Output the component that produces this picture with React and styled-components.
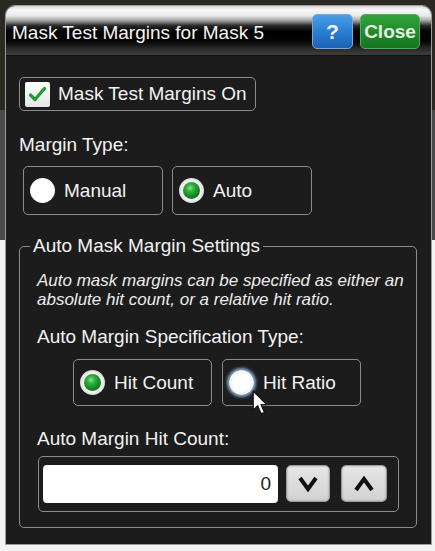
import React from "react";
import styled, { createGlobalStyle, css } from "styled-components";

const GlobalStyle = createGlobalStyle`
  html, body {
    margin: 0;
    padding: 0;
  }
  body {
    width: 435px;
    height: 551px;
    overflow: hidden;
    font-family: "Liberation Sans", Arial, sans-serif;
    background: linear-gradient(
      to bottom,
      #2b2a22 0,
      #2b2a22 110px,
      #4a4a4a 110px,
      #4a4a4a 240px,
      #f3f3f3 240px
    );
  }
`;

const Dialog = styled.div`
  position: relative;
  margin: 5px 0 0 5px;
  width: 425px;
  background: #1d1c1d;
  border: 1px solid #9a9a9a;
  border-radius: 10px 10px 0 0;
  overflow: hidden;
  color: #f2f2f2;
`;

const TitleBar = styled.div`
  height: 50px;
  box-sizing: border-box;
  display: flex;
  align-items: flex-start;
  padding: 8px 11px 0 6px;
  border-bottom: 1px solid #111;
  background: linear-gradient(
    to bottom,
    #d8d8d8 0%,
    #f8f8f8 8%,
    #e8e8e8 20%,
    #a0a0a0 30%,
    #2a2a2a 40%,
    #000 52%,
    #050505 72%,
    #2c2c2c 88%,
    #3c3c3c 100%
  );
`;

const Title = styled.div`
  flex: 1;
  margin-top: 8px;
  font-size: 19px;
  line-height: 22px;
  color: #f4f4f4;
  white-space: nowrap;
`;

const TitleButton = styled.button`
  height: 35px;
  margin-left: 7px;
  padding: 0;
  border-radius: 5px;
  font-family: "Liberation Sans", Arial, sans-serif;
  font-weight: bold;
  color: #f4f4f4;
  ${(p) =>
    p.$kind === "help"
      ? css`
          width: 41px;
          font-size: 21px;
          border: 1px solid #7aa8d8;
          background: linear-gradient(to bottom, #4c9ee6 0%, #2a7ed4 50%, #1c62b4 100%);
        `
      : css`
          width: 60px;
          font-size: 19px;
          border: 1px solid #5aa85e;
          background: linear-gradient(to bottom, #33a23e 0%, #1f8c2a 50%, #177420 100%);
          color: #e4efe4;
        `}
`;

const Body = styled.div`
  padding: 21px 14px 16px 13px;
  display: flex;
  flex-direction: column;
  align-items: flex-start;
`;

const Frame = styled.div`
  box-sizing: border-box;
  border: 1px solid #8c8c8c;
  border-radius: 5px;
`;

const CheckFrame = styled(Frame)`
  width: 237px;
  height: 34px;
  display: flex;
  align-items: center;
  padding-left: 5px;
  font-size: 19px;
`;

const CheckBox = styled.span`
  width: 25px;
  height: 25px;
  margin-right: 8px;
  border-radius: 2px;
  background: linear-gradient(to bottom, #fff, #e6e6e6);
  display: flex;
  align-items: center;
  justify-content: center;
`;

const Label = styled.div`
  font-size: 19px;
  line-height: 22px;
  margin-top: ${(p) => p.$top || 0}px;
  white-space: nowrap;
`;

const RadioRow = styled.div`
  display: flex;
  gap: ${(p) => p.$gap}px;
  margin-top: ${(p) => p.$top}px;
  margin-left: ${(p) => p.$left}px;
`;

const RadioBox = styled(Frame)`
  position: relative;
  width: ${(p) => p.$w}px;
  height: ${(p) => p.$h}px;
  display: flex;
  align-items: center;
  padding-left: 6px;
  font-size: 19px;
`;

const RadioDot = styled.span`
  width: 25px;
  height: 25px;
  border-radius: 50%;
  margin-right: 9px;
  flex: none;
  display: flex;
  align-items: center;
  justify-content: center;
  ${(p) =>
    p.$on
      ? css`
          background: radial-gradient(circle, #f4f4f4 55%, #bcbcbc 85%, #8a8a8a 100%);
          &::after {
            content: "";
            width: 17px;
            height: 17px;
            border-radius: 50%;
            background: radial-gradient(
              circle at 42% 35%,
              #8ee08e 0,
              #34b040 25%,
              #13861f 60%,
              #0a4d10 100%
            );
          }
        `
      : css`
          background: radial-gradient(circle, #ffffff 60%, #e4e4e4 85%, #bdbdbd 100%);
        `}
  ${(p) =>
    p.$hover &&
    css`
      background: radial-gradient(circle, #ffffff 50%, #dbe8f6 80%, #a9c8ec 100%);
      box-shadow: 0 0 3px 2px rgba(150, 190, 235, 0.85);
    `}
`;

const Group = styled.fieldset`
  box-sizing: border-box;
  align-self: stretch;
  margin: 20px 0 0 0;
  padding: 0 10px 15px 10px;
  border: 1px solid #8c8c8c;
  border-radius: 5px;
`;

const Legend = styled.legend`
  padding: 0 3px;
  font-size: 19px;
  line-height: 22px;
`;

const GroupContent = styled.div`
  padding-left: 7px;
  display: flex;
  flex-direction: column;
  align-items: flex-start;
`;

const Note = styled.div`
  margin-top: 14px;
  font-style: italic;
  font-size: 17px;
  line-height: 19px;
  color: #ececec;
`;

const SpinFrame = styled(Frame)`
  margin-top: 6px;
  margin-left: 1px;
  width: 361px;
  height: 56px;
  display: flex;
  align-items: flex-start;
  padding: 8px 0 0 4px;
`;

const NumberField = styled.div`
  width: 235px;
  height: 38px;
  box-sizing: border-box;
  border-radius: 4px;
  background: #fff;
  color: #222;
  font-size: 19px;
  display: flex;
  align-items: center;
  justify-content: flex-end;
  padding-right: 7px;
`;

const SpinButton = styled.div`
  width: ${(p) => p.$w}px;
  height: 37px;
  margin-left: ${(p) => p.$gap}px;
  box-sizing: border-box;
  border-radius: 5px;
  border: 1px solid #9c9c9c;
  background: linear-gradient(to bottom, #e6e6e6, #d2d2d2);
  box-shadow: inset 0 0 2px rgba(0, 0, 0, 0.35);
  display: flex;
  align-items: center;
  justify-content: center;
`;

const Pointer = styled.svg`
  position: absolute;
  left: 29px;
  top: 30px;
`;

const Check = () => (
  <svg width="19" height="17" viewBox="0 0 19 17">
    <path d="M2.5 9 L7 13.5 L16.5 2.5" fill="none" stroke="#1f9a2c" strokeWidth="3.2" strokeLinecap="round" strokeLinejoin="round" />
  </svg>
);

const Chevron = ({ up }) => (
  <svg width="20" height="16" viewBox="0 0 20 16">
    <path
      d={up ? "M2 14 L10 3 L18 14" : "M2 2 L10 13 L18 2"}
      fill="none"
      stroke="#111"
      strokeWidth="4"
      strokeLinejoin="miter"
    />
  </svg>
);

const App = () => {
  return (
    <>
      <GlobalStyle />
      <Dialog>
        <TitleBar>
          <Title>Mask Test Margins for Mask 5</Title>
          <TitleButton $kind="help">?</TitleButton>
          <TitleButton $kind="close">Close</TitleButton>
        </TitleBar>
        <Body>
          <CheckFrame>
            <CheckBox>
              <Check />
            </CheckBox>
            Mask Test Margins On
          </CheckFrame>

          <Label $top={23}>Margin Type:</Label>
          <RadioRow $top={10} $left={4} $gap={9}>
            <RadioBox $w={140} $h={49}>
              <RadioDot />
              Manual
            </RadioBox>
            <RadioBox $w={140} $h={49}>
              <RadioDot $on />
              Auto
            </RadioBox>
          </RadioRow>

          <Group>
            <Legend>Auto Mask Margin Settings</Legend>
            <GroupContent>
              <Note>
                Auto mask margins can be specified as either an
                <br />
                absolute hit count, or a relative hit ratio.
              </Note>
              <Label $top={17}>Auto Margin Specification Type:</Label>
              <RadioRow $top={11} $left={36} $gap={10}>
                <RadioBox $w={139} $h={47}>
                  <RadioDot $on />
                  Hit Count
                </RadioBox>
                <RadioBox $w={139} $h={47}>
                  <RadioDot $hover />
                  Hit Ratio
                  <Pointer width="17" height="27" viewBox="0 0 15 24">
                    <path
                      d="M1 1 L1 18 L5 14 L8 21 L11 20 L8 13 L13 13 Z"
                      fill="#fff"
                      stroke="#111"
                      strokeWidth="1.1"
                      strokeLinejoin="round"
                    />
                  </Pointer>
                </RadioBox>
              </RadioRow>
              <Label $top={22}>Auto Margin Hit Count:</Label>
              <SpinFrame>
                <NumberField>0</NumberField>
                <SpinButton $w={44} $gap={8}>
                  <Chevron />
                </SpinButton>
                <SpinButton $w={46} $gap={11}>
                  <Chevron up />
                </SpinButton>
              </SpinFrame>
            </GroupContent>
          </Group>
        </Body>
      </Dialog>
    </>
  );
};

export default App;
